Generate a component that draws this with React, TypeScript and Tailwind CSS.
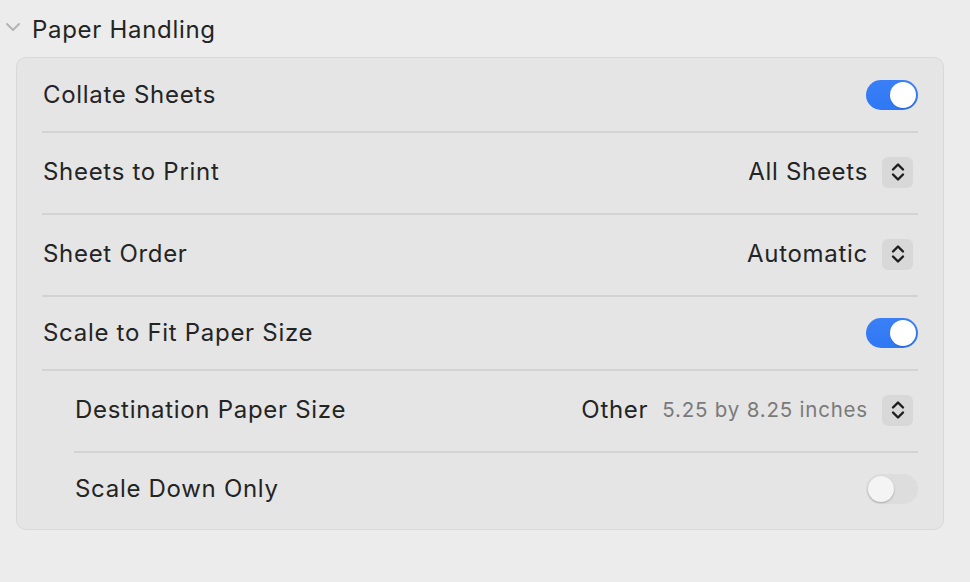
import React from "react";

function Toggle({ on }: { on: boolean }) {
  return on ? (
    <div className="w-[52px] h-[30px] rounded-full bg-gradient-to-b from-[#3a7ff6] to-[#2f78f4] flex items-center justify-end pr-[2px]">
      <div className="w-[26px] h-[26px] rounded-full bg-white shadow-[0_1px_1px_rgba(0,0,0,0.15)]" />
    </div>
  ) : (
    <div className="w-[52px] h-[30px] rounded-full bg-[#dddddd] flex items-center justify-start pl-[2px]">
      <div className="w-[26px] h-[26px] rounded-full bg-[#f4f4f4] shadow-[0_1px_2px_rgba(0,0,0,0.25)]" />
    </div>
  );
}

function Stepper() {
  return (
    <div className="w-[31px] h-[31px] rounded-[6px] bg-[#d8d8d8] flex items-center justify-center">
      <svg width="16" height="22" viewBox="0 0 16 22" fill="none" stroke="#1c1c1c" strokeWidth="2.4" strokeLinecap="round" strokeLinejoin="round">
        <path d="M3 8.5 L8 3.5 L13 8.5" />
        <path d="M3 13.5 L8 18.5 L13 13.5" />
      </svg>
    </div>
  );
}

function Divider({ indent }: { indent?: boolean }) {
  return <div className={indent ? "h-[2px] bg-[#d3d3d3] ml-[57px] mr-[25px]" : "h-[2px] bg-[#d3d3d3] mx-[25px]"} />;
}

const label = "text-[24px] tracking-[0.7px]";

export default function App() {
  const font = { fontFamily: "Inter, 'Noto Sans', sans-serif" };
  return (
    <div className="w-[970px] h-[582px] bg-[#ececec] text-[#242424] overflow-hidden" style={font}>
      <div className="h-[57px] flex items-start pt-[14px]">
        <div className="w-[33px] flex justify-center pl-[4px] pt-[8px]">
          <svg width="16" height="10" viewBox="0 0 16 10" fill="none" stroke="#b4b4b4" strokeWidth="2" strokeLinecap="round" strokeLinejoin="round" className="-ml-[12px]">
            <path d="M2 2 L8 8 L14 2" />
          </svg>
        </div>
        <div className={`${label} leading-[32px] -ml-[1px]`}>Paper Handling</div>
      </div>
      <div className="ml-[16px] w-[928px] h-[473px] rounded-[10px] border border-[#d8d8d8] bg-[#e5e5e5] flex flex-col">
        <div className="h-[73px] flex items-center justify-between pl-[26px] pr-[25px] pt-[1px]">
          <span className={label}>Collate Sheets</span>
          <Toggle on />
        </div>
        <Divider />
        <div className="h-[80px] flex items-center justify-between pl-[26px] pr-[30px] pb-[2px]">
          <span className={label}>Sheets to Print</span>
          <div className="flex items-center gap-[14px]">
            <span className={label}>All Sheets</span>
            <Stepper />
          </div>
        </div>
        <Divider />
        <div className="h-[80px] flex items-center justify-between pl-[26px] pr-[30px] pb-[2px]">
          <span className={label}>Sheet Order</span>
          <div className="flex items-center gap-[14px]">
            <span className={label}>Automatic</span>
            <Stepper />
          </div>
        </div>
        <Divider />
        <div className="h-[72px] flex items-center justify-between pl-[26px] pr-[25px]">
          <span className={label}>Scale to Fit Paper Size</span>
          <Toggle on />
        </div>
        <Divider />
        <div className="h-[80px] flex items-center justify-between pl-[58px] pr-[30px] pb-[2px]">
          <span className={label}>Destination Paper Size</span>
          <div className="flex items-center gap-[14px]">
            <span className={label}>Other</span>
            <span className="text-[20.5px] tracking-[0.8px] text-[#7a7a7a]">5.25 by 8.25 inches</span>
            <Stepper />
          </div>
        </div>
        <Divider indent />
        <div className="flex-1 flex items-center justify-between pl-[58px] pr-[25px] pb-[4px]">
          <span className={label}>Scale Down Only</span>
          <Toggle on={false} />
        </div>
      </div>
    </div>
  );
}
